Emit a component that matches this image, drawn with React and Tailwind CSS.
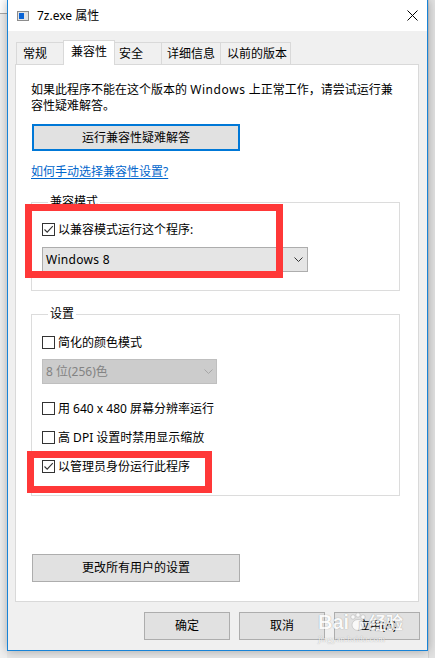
import React from 'react'

const font = "font-['Noto_Sans','Noto_Sans_CJK_SC',sans-serif]"

function Check({ checked }) {
  return (
    <span className="w-[13px] h-[13px] border border-[#333333] bg-white flex items-center justify-center shrink-0">
      {checked && (
        <svg width="11" height="11" viewBox="0 0 11 11">
          <path d="M1.5 5.5 L4.2 8.2 L9.8 2.2" fill="none" stroke="#333333" strokeWidth="1.1" />
        </svg>
      )}
    </span>
  )
}

function CheckRow({ checked, children, className = '' }) {
  return (
    <div className={`h-[17px] flex items-center gap-[3px] text-[12px] leading-[17px] text-black whitespace-nowrap ${className}`}>
      <Check checked={checked} />
      <span>{children}</span>
    </div>
  )
}

function Chevron({ color }) {
  return (
    <svg width="9" height="5" viewBox="0 0 9 5">
      <path d="M0.5 0.5 L4.5 4.5 L8.5 0.5" fill="none" stroke={color} strokeWidth="1" />
    </svg>
  )
}

function Tab({ label, active, className }) {
  return (
    <div
      className={`${className} border-[#d9d9d9] text-[12px] leading-[17px] pt-[2px] text-black whitespace-nowrap ${
        active ? 'h-[25px] bg-white -mb-px relative z-10' : 'h-[22px] bg-[#f0f0f0]'
      }`}
    >
      {label}
    </div>
  )
}

function GroupBox({ label, className = '', children }) {
  return (
    <fieldset className={`w-[369px] border border-[#dcdcdc] px-[10px] ${className}`}>
      <legend className="ml-[6px] px-[2px] text-[12px] leading-[14px] text-black">{label}</legend>
      {children}
    </fieldset>
  )
}

export default function App() {
  return (
    <div className={`w-[435px] h-[658px] overflow-hidden bg-[#e8e8e8] flex relative ${font}`}>
      {/* left background window */}
      <div className="w-[7px] shrink-0 flex flex-col">
        <div className="h-[14px] bg-white border-b border-[#a8a8a8]" />
        <div className="flex-1 bg-[#f0f0f0]" />
      </div>

      {/* dialog */}
      <div className="w-[421px] h-[651px] shrink-0 border-x border-b border-[#1883d7] bg-[#f0f0f0] flex flex-col shadow-[0_0_10px_rgba(0,0,0,0.3)] relative z-10">
        {/* title bar */}
        <div className="h-[31px] bg-white flex items-center pl-[9px] pr-[8px]">
          <svg width="12" height="10" viewBox="0 0 12 10" className="shrink-0">
            <rect x="0.5" y="0.5" width="11" height="9" fill="#e4e4e4" stroke="#8c8c8c" />
            <rect x="2" y="2" width="5" height="6" fill="#0a64d6" />
          </svg>
          <span className="ml-[8px] text-[12px] leading-[16px] text-black">7z.exe 属性</span>
          <svg width="11" height="11" viewBox="0 0 11 11" className="ml-auto mr-[1px]">
            <path d="M0.5 0.5 L10.5 10.5 M10.5 0.5 L0.5 10.5" stroke="#000" strokeWidth="1" />
          </svg>
        </div>

        {/* body */}
        <div className="flex-1 flex flex-col pt-[9px] pl-[7px] pr-[8px]">
          {/* tabs */}
          <div className="h-[24px] flex items-end ml-px">
            <Tab label="常规" className="w-[47px] border-l border-t pl-[6px]" />
            <Tab label="兼容性" active className="w-[52px] border-l border-t border-r pl-[7px]" />
            <Tab label="安全" className="w-[46px] border-t pl-[4px]" />
            <Tab label="详细信息" className="w-[59px] border-l border-t pl-[5px]" />
            <Tab label="以前的版本" className="w-[71px] border-l border-t border-r pl-[6px]" />
          </div>

          {/* tab page */}
          <div className="h-[538px] bg-white border border-[#d9d9d9] flex flex-col pt-[17px] pl-[15px] pb-[19px]">
            <p className="text-[12px] leading-[16px] text-black whitespace-nowrap">
              如果此程序不能在这个版本的 <span className="tracking-[0.6px]">Windows</span> 上正常工作，请尝试运行兼
              <br />
              容性疑难解答。
            </p>

            <button className="mt-[10px] ml-px w-[208px] h-[27px] bg-[#e1e1e1] border-2 border-[#0078d7] text-[12px] leading-[16px] text-black">
              运行兼容性疑难解答
            </button>

            <a className="mt-[13px] text-[12px] leading-[16px] text-[#0066cc] underline underline-offset-2 self-start">
              如何手动选择兼容性设置?
            </a>

            <GroupBox label="兼容模式" className="mt-[15px] pt-[12px] pb-[18px]">
              <CheckRow checked>以兼容模式运行这个程序:</CheckRow>
              <div className="mt-[9px] w-[266px] h-[25px] bg-[#e5e5e5] border border-[#adadad] flex items-center pl-[3px] pr-[4px] text-[12px] text-black">
                <span className="tracking-[0.3px]">Windows 8</span>
                <span className="ml-auto flex">
                  <Chevron color="#333333" />
                </span>
              </div>
            </GroupBox>

            <GroupBox label="设置" className="mt-[16px] pt-[13px] pb-[20px]">
              <CheckRow>简化的颜色模式</CheckRow>
              <div className="mt-[8px] w-[175px] h-[25px] bg-[#cccccc] border border-[#bfbfbf] flex items-center pl-[3px] pr-[3px] text-[12px] text-[#838383]">
                <span>8 位(256)色</span>
                <span className="ml-auto flex">
                  <Chevron color="#a6a6a6" />
                </span>
              </div>
              <CheckRow className="mt-[16px]">用 640 x 480 屏幕分辨率运行</CheckRow>
              <CheckRow className="mt-[12px]">高 DPI 设置时禁用显示缩放</CheckRow>
              <CheckRow checked className="mt-[12px]">以管理员身份运行此程序</CheckRow>
            </GroupBox>

            <button className="mt-auto ml-px w-[208px] h-[28px] bg-[#e1e1e1] border border-[#adadad] text-[12px] leading-[16px] text-black">
              更改所有用户的设置
            </button>
          </div>

          {/* dialog buttons */}
          <div className="mt-[10px] flex justify-end gap-[9px] mr-[-1px]">
            <button className="w-[86px] h-[28px] bg-[#e1e1e1] border border-[#adadad] text-[12px] text-black">确定</button>
            <button className="w-[86px] h-[28px] bg-[#e1e1e1] border border-[#adadad] text-[12px] text-black">取消</button>
            <button className="w-[86px] h-[28px] bg-[#e1e1e1] border border-[#adadad] text-[12px] text-black">应用(A)</button>
          </div>
        </div>
      </div>

      {/* right background window */}
      <div className="flex-1 bg-[#e2e2e2] border-l border-[#d0d0d0]" />

      {/* highlight boxes */}
      <div className="absolute left-[25px] top-[204px] w-[258px] h-[74px] border-[7px] border-[#ff3838] z-20" />
      <div className="absolute left-[27px] top-[451px] w-[185px] h-[42px] border-[7px] border-[#ff3838] z-20" />

      {/* watermark */}
      <div className="absolute left-[318px] top-[610px] z-20 flex flex-col items-start text-white opacity-80 [text-shadow:0_0_1px_rgba(0,0,0,0.45)]">
        <div className="flex items-end">
          <span className="text-[20px] leading-[24px] font-bold font-['Liberation_Sans',sans-serif]">Bai</span>
          <svg width="18" height="20" viewBox="0 0 18 20" className="mb-[2px]">
            <g fill="#ffffff" stroke="#b0b0b0" strokeWidth="0.6">
              <circle cx="4" cy="5" r="2.2" />
              <circle cx="9" cy="3" r="2.2" />
              <circle cx="14" cy="5" r="2.2" />
              <ellipse cx="9" cy="13" rx="6" ry="5.5" />
            </g>
          </svg>
          <span className="ml-[2px] text-[17px] leading-[22px] font-bold">经验</span>
        </div>
        <span className="text-[9px] leading-[10px] font-['Liberation_Serif',serif]">jingyan.baidu.com</span>
      </div>
    </div>
  )
}
